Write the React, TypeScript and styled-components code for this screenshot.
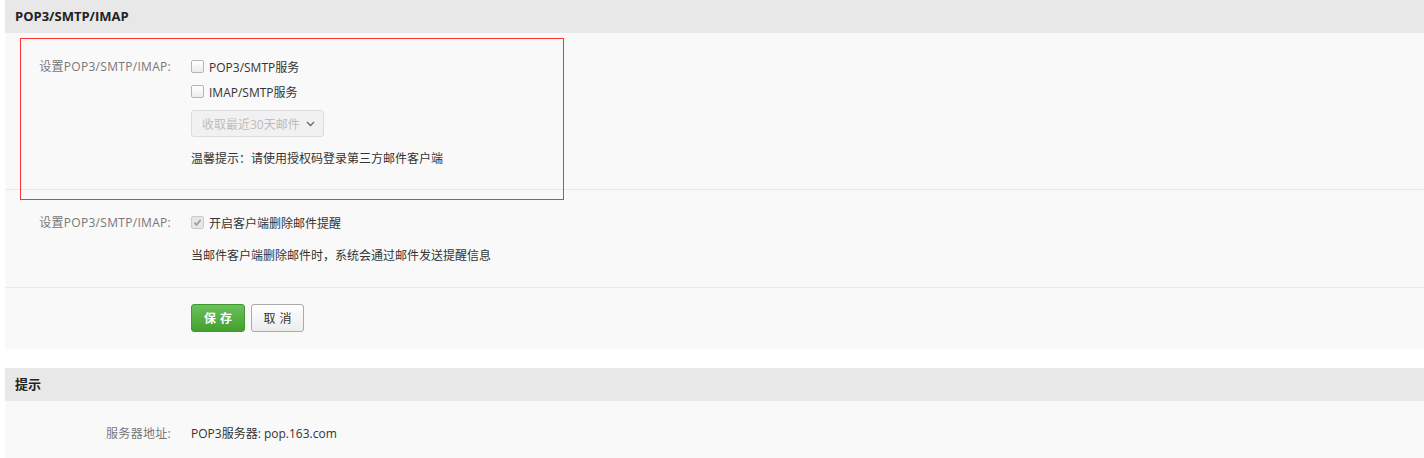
import React from 'react';
import styled, { createGlobalStyle } from 'styled-components';

const GlobalStyle = createGlobalStyle`
  body {
    margin: 0;
    background: #fff;
    font-family: "Open Sans", "Noto Sans CJK SC", sans-serif;
    font-size: 12px;
    color: #333;
  }
`;

const Page = styled.div`
  position: relative;
  padding-left: 5px;
`;

const Panel = styled.section`
  background: #f9f9f9;
  & + & {
    margin-top: 19px;
  }
`;

const PanelHeader = styled.div`
  height: 33px;
  line-height: 33px;
  padding-left: 10px;
  background: #e8e8e8;
  font-weight: bold;
  font-size: 13px;
  color: #222;
`;

const Section = styled.div<{ top?: number; bottom?: number }>`
  padding: ${(p) => p.top ?? 20}px 0 ${(p) => p.bottom ?? 20}px;
  & + & {
    border-top: 1px solid #e8e8e8;
  }
`;

const FormRow = styled.div`
  display: grid;
  grid-template-columns: 186px 1fr;
  align-items: start;
`;

const Label = styled.div`
  padding-right: 20px;
  text-align: right;
  line-height: 25px;
  color: #777;
  letter-spacing: 0.3px;
`;

const Field = styled.div`
  display: flex;
  flex-direction: column;
  align-items: flex-start;
`;

const CheckRow = styled.label`
  display: flex;
  align-items: center;
  gap: 5px;
  height: 25px;
  color: #333;
`;

const Box = styled.span<{ checked?: boolean }>`
  width: 11px;
  height: 11px;
  border: 1px solid ${(p) => (p.checked ? '#ccc' : '#b5b5b5')};
  border-radius: 2px;
  background: ${(p) =>
    p.checked ? '#e6e6e6' : 'linear-gradient(#fff, #ececec)'};
  display: flex;
  align-items: center;
  justify-content: center;
`;

const Select = styled.div`
  margin-top: 6px;
  height: 25px;
  padding: 0 8px 0 10px;
  display: flex;
  align-items: center;
  gap: 6px;
  border: 1px solid #dcdcdc;
  border-radius: 3px;
  background: #f1f1f1;
  color: #bdbdbd;
`;

const Note = styled.div<{ gap?: number }>`
  margin-top: ${(p) => p.gap ?? 11}px;
  line-height: 20px;
  color: #333;
`;

const Buttons = styled.div`
  display: flex;
  gap: 6px;
`;

const Button = styled.button<{ primary?: boolean }>`
  height: 28px;
  padding: 0;
  width: ${(p) => (p.primary ? 54 : 53)}px;
  border-radius: 3px;
  font-family: inherit;
  font-size: 12px;
  letter-spacing: 4px;
  text-indent: 4px;
  cursor: pointer;
  border: 1px solid ${(p) => (p.primary ? '#3d9a2b' : '#aaa')};
  background: ${(p) =>
    p.primary
      ? 'linear-gradient(#6cc05c, #44a02d)'
      : 'linear-gradient(#fff, #ececec)'};
  color: ${(p) => (p.primary ? '#fff' : '#333')};
  font-weight: ${(p) => (p.primary ? 'bold' : 'normal')};
`;

const Value = styled.div`
  line-height: 25px;
  color: #333;
`;

const Highlight = styled.div`
  position: absolute;
  left: 20px;
  top: 38px;
  width: 542px;
  height: 160px;
  border: 1px solid #f33;
  pointer-events: none;
`;

const Check = () => (
  <svg width="9" height="9" viewBox="0 0 9 9">
    <path d="M1.5 4.8 L3.6 6.8 L7.6 2" fill="none" stroke="#999" strokeWidth="1.6" />
  </svg>
);

const Chevron = () => (
  <svg width="9" height="6" viewBox="0 0 9 6">
    <path d="M1 1 L4.5 4.5 L8 1" fill="none" stroke="#666" strokeWidth="1.3" />
  </svg>
);

export default function App() {
  return (
    <Page>
      <GlobalStyle />
      <Panel>
        <PanelHeader>POP3/SMTP/IMAP</PanelHeader>
        <Section top={21} bottom={20}>
          <FormRow>
            <Label>设置POP3/SMTP/IMAP:</Label>
            <Field>
              <CheckRow>
                <Box />
                POP3/SMTP服务
              </CheckRow>
              <CheckRow>
                <Box />
                IMAP/SMTP服务
              </CheckRow>
              <Select>
                收取最近30天邮件
                <Chevron />
              </Select>
              <Note gap={12}>温馨提示：请使用授权码登录第三方邮件客户端</Note>
            </Field>
          </FormRow>
        </Section>
        <Section top={20} bottom={21}>
          <FormRow>
            <Label>设置POP3/SMTP/IMAP:</Label>
            <Field>
              <CheckRow>
                <Box checked>
                  <Check />
                </Box>
                开启客户端删除邮件提醒
              </CheckRow>
              <Note>当邮件客户端删除邮件时，系统会通过邮件发送提醒信息</Note>
            </Field>
          </FormRow>
        </Section>
        <Section top={16} bottom={17}>
          <FormRow>
            <div />
            <Buttons>
              <Button primary>保存</Button>
              <Button>取消</Button>
            </Buttons>
          </FormRow>
        </Section>
      </Panel>
      <Panel>
        <PanelHeader>提示</PanelHeader>
        <Section top={20} bottom={20}>
          <FormRow>
            <Label>服务器地址:</Label>
            <Value>POP3服务器: pop.163.com</Value>
          </FormRow>
        </Section>
      </Panel>
      <Highlight />
    </Page>
  );
}
